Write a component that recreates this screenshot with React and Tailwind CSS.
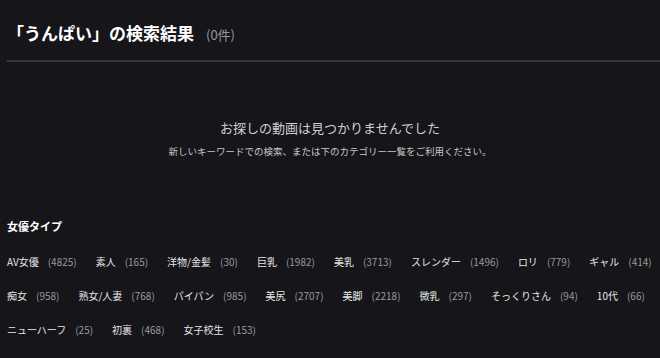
const tags = [
  ["AV女優", 4825], ["素人", 165], ["洋物/金髪", 30], ["巨乳", 1982], ["美乳", 3713],
  ["スレンダー", 1496], ["ロリ", 779], ["ギャル", 414], ["痴女", 958], ["熟女/人妻", 768],
  ["パイパン", 985], ["美尻", 2707], ["美脚", 2218], ["微乳", 297], ["そっくりさん", 94],
  ["10代", 66], ["ニューハーフ", 25], ["初裏", 468], ["女子校生", 153],
];

export default function App() {
  return (
    <div
      className="w-[660px] h-[358px] overflow-hidden bg-[#15151a] text-[#e6e6e6]"
      style={{ fontFamily: '"Noto Sans CJK JP", "Noto Sans", sans-serif' }}
    >
      <div className="pl-[7px]">
        <div className="h-[60px] flex items-center pt-[6px]">
          <h1 className="text-[17px] font-bold text-white">「うんぱい」の検索結果</h1>
          <span className="ml-[12px] mt-[3px] text-[13px] text-[#9a9a9a]">(0件)</span>
        </div>
        <div className="h-[2px] bg-[#37373c]" />
      </div>

      <div className="flex flex-col items-center pt-[56px]">
        <p className="text-[13px] text-[#d0d0d0] leading-[20px]">お探しの動画は見つかりませんでした</p>
        <p className="mt-[6px] text-[9.5px] text-[#c8c8c8] leading-[14px]">
          新しいキーワードでの検索、または下のカテゴリー一覧をご利用ください。
        </p>
      </div>

      <div className="pl-[7px] pt-[60px]">
        <h2 className="text-[11px] font-bold text-white leading-[16px]">女優タイプ</h2>
        <div className="mt-[10px] flex flex-wrap gap-x-[19px]">
          {tags.map(([name, count]) => (
            <a key={name} className="h-[34px] flex items-center text-[10px]">
              <span className="text-[#e6e6e6]">{name}</span>
              <span className="ml-[9px] text-[#9a9a9a]">({count})</span>
            </a>
          ))}
        </div>
      </div>
    </div>
  );
}
